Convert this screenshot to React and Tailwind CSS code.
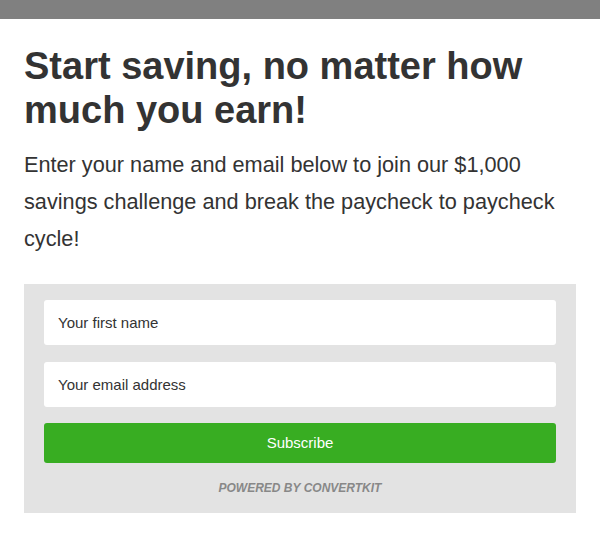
export default function App() {
  return (
    <div className="w-[600px] h-[537px] bg-white text-[#333] font-['Liberation_Sans',Arial,sans-serif]">
      <div className="h-[19px] bg-[#808080]" />
      <div className="px-6 pt-[25px]">
        <h1 className="text-[38px] leading-[44px] font-bold">Start saving, no matter how much you earn!</h1>
        <p className="mt-[14px] text-[21.7px] leading-[37px]">
          Enter your name and email below to join our $1,000 savings challenge and break the paycheck to paycheck cycle!
        </p>
        <div className="mt-[27px] bg-[#e3e3e3] px-5 pt-4 pb-[16px]">
          <div className="flex flex-col gap-[17px]">
            <input
              className="h-[45px] w-full rounded-[3px] bg-white px-[14px] text-[15px] text-[#333] placeholder:text-[#333] outline-none"
              placeholder="Your first name"
            />
            <input
              className="h-[45px] w-full rounded-[3px] bg-white px-[14px] text-[15px] text-[#333] placeholder:text-[#333] outline-none"
              placeholder="Your email address"
            />
          </div>
          <button className="mt-[16px] h-[40px] w-full rounded-[3px] bg-[#38ad22] text-[15px] text-white">Subscribe</button>
          <div className="mt-[16px] text-center text-[12px] font-bold italic uppercase text-[#888]">Powered by ConvertKit</div>
        </div>
      </div>
    </div>
  );
}
